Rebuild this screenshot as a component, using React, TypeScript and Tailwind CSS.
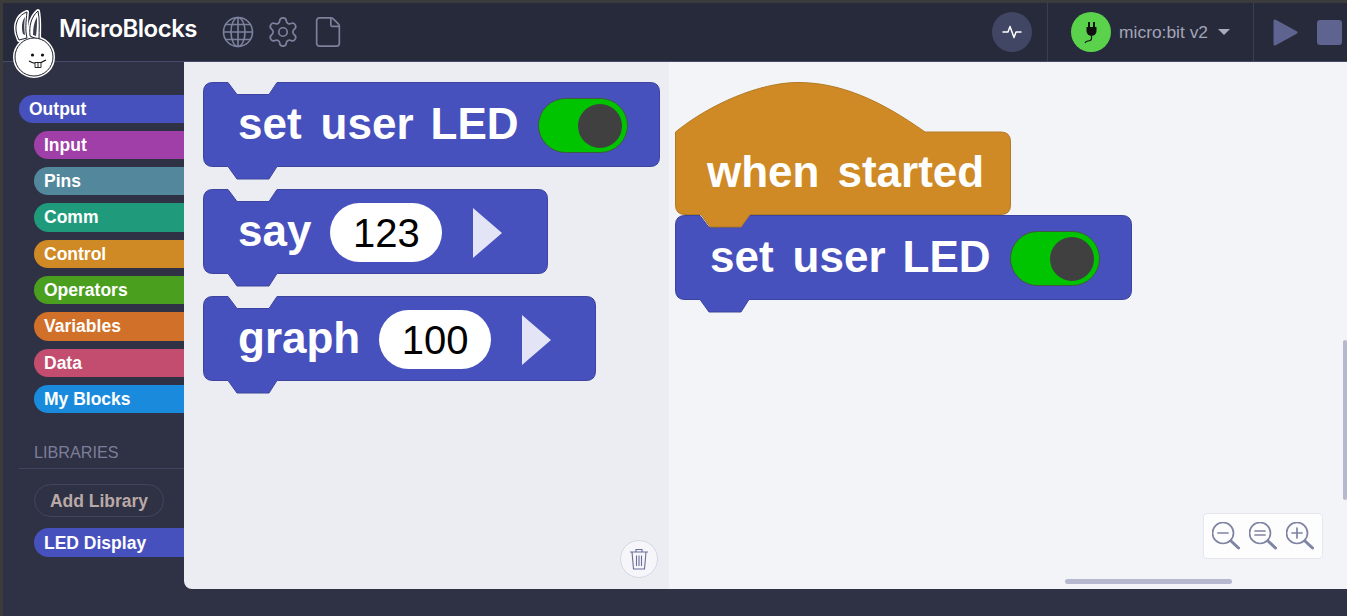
import { File, Settings } from "lucide-react";
import type { ReactNode } from "react";

const BLUE = "#4751bd";
const BLUE_EDGE = "#3c449f";
const ORANGE = "#cf8a25";
const ORANGE_EDGE = "#b27a24";

const categories = [
    { name: "Input", color: "bg-[#9f3fa7]" },
    { name: "Pins", color: "bg-[#53889c]" },
    { name: "Comm", color: "bg-[#1f9b7c]" },
    { name: "Control", color: "bg-[#cf8a25]" },
    { name: "Operators", color: "bg-[#4a9f1f]" },
    { name: "Variables", color: "bg-[#d17028]" },
    { name: "Data", color: "bg-[#c34d6e]" },
    { name: "My Blocks", color: "bg-[#1a8bdc]" },
];

const blockPath = (w: number, h: number) =>
    `M.5,10 Q.5,.5 10,.5 L25,.5 L34,12.5 L66,12.5 L74,.5 L${w - 10},.5 Q${w - 0.5},.5 ${w - 0.5},10 L${w - 0.5},${h - 10} Q${w - 0.5},${h - 0.5} ${w - 10},${h - 0.5} L74,${h - 0.5} L66,${h + 12} L34,${h + 12} L25,${h - 0.5} L10,${h - 0.5} Q.5,${h - 0.5} .5,${h - 10} Z`;

const hatPath = (w: number, h: number) =>
    `M.5,50 C35,22 85,.5 123,.5 C165,.5 205,18 250,50 L${w - 10},50 Q${w - 0.5},50 ${w - 0.5},60 L${w - 0.5},${h - 10} Q${w - 0.5},${h - 0.5} ${w - 10},${h - 0.5} L75,${h - 0.5} L66,${h + 12} L35,${h + 12} L26,${h - 0.5} L10,${h - 0.5} Q.5,${h - 0.5} .5,${h - 10} Z`;

const Block = ({ w, children }: { w: number; children: ReactNode }) => (
    <div className="relative h-[85px]">
        <svg width={w} height={99} className="absolute left-0 top-0">
            <path d={blockPath(w, 85)} fill={BLUE} stroke={BLUE_EDGE} />
        </svg>
        <div className="relative flex h-[85px] items-center pl-[35px] text-[44px] font-bold text-white">{children}</div>
    </div>
);

const Toggle = () => (
    <div className="ml-[1px] mt-[2px] flex h-[55px] w-[90px] items-center justify-end rounded-full border border-[#3f5a3f] bg-[#00c400] pr-[5px]">
        <div className="size-[44px] rounded-full bg-[#404040]" />
    </div>
);

const SetUserLed = () => (
    <Block w={457}>
        <div className="flex items-center gap-[18px]">
            <span className="mb-[2px]">set</span>
            <span className="mb-[2px] ml-[1px]">user</span>
            <span className="mb-[2px] -ml-[1px]">LED</span>
            <Toggle />
        </div>
    </Block>
);

const NumberSlot = ({ value }: { value: string }) => (
    <div className="mt-[2px] flex h-[59px] w-[112px] items-center justify-center rounded-full bg-white text-[40px] font-normal text-black">
        {value}
    </div>
);

const MoreArrow = () => (
    <svg width="30" height="50" className="ml-[31px] mt-[2px]">
        <polygon points="0,0 29,25 0,50" fill="#e3e4f6" />
    </svg>
);

const ZoomIcon = ({ children }: { children?: ReactNode }) => (
    <svg width="28" height="28" viewBox="0 0 28 28" fill="none" stroke="#7f84a3" strokeWidth="1.7" strokeLinecap="round">
        <circle cx="11" cy="11" r="10.5" />
        <path d="M19,19 L26.5,26" strokeWidth="3" />
        {children}
    </svg>
);

const Rabbit = () => (
    <svg width="50" height="72" viewBox="0 0 50 72" className="absolute left-[10px] top-[5px] z-20">
        <g fill="white" stroke="white" strokeWidth="4" strokeLinejoin="round">
            <path d="M6,32 C0,20 3,8 14,4 C13,13 12,22 14,30 Z" />
            <path d="M17,28 C16,18 18,9 25,3 C27,12 26,22 26,32 Z" />
            <circle cx="21" cy="49" r="19" />
        </g>
        <g fill="white" stroke="#1d1f2b" strokeWidth="1" strokeLinejoin="round">
            <path d="M6,32 C0,20 3,8 14,4 C13,13 12,22 14,30 Z" />
            <path d="M17,28 C16,18 18,9 25,3 C27,12 26,22 26,32 Z" />
            <circle cx="21" cy="49" r="19" />
        </g>
        <path d="M10,26 C8,19 9,13 12,9 C11,15 11,21 12,27 Z" fill="#3a3d50" />
        <path d="M20,27 C20,20 21,14 24,9 C24,15 24,21 23,28 Z" fill="#3a3d50" />
        <circle cx="19.5" cy="47" r="1.6" fill="#111" />
        <circle cx="29.5" cy="47" r="1.6" fill="#111" />
        <path d="M16,53 Q24,58 33,52" fill="none" stroke="#111" strokeWidth="1.2" />
        <path d="M22,54.5 h6 v5 h-6 z M25,54.5 v5" fill="white" stroke="#111" strokeWidth="0.9" />
    </svg>
);

const Header = () => (
    <header className="flex h-[59px] shrink-0 items-center border-b border-[#45496a] bg-[#272a3b] pl-[56px] pr-[5px]">
        <span className="mb-[6px] font-['Inter',sans-serif] text-[24px] font-semibold tracking-[-0.5px] text-white">MicroBlocks</span>
        <svg width="32" height="32" viewBox="0 0 32 32" fill="none" stroke="#7d819c" strokeWidth="1.6" className="ml-[25px]">
            <circle cx="16" cy="16" r="14.5" />
            <ellipse cx="16" cy="16" rx="7" ry="14.5" />
            <path d="M16,1.5 V30.5 M1.5,16 H30.5 M4,8.5 H28 M4,23.5 H28" />
        </svg>
        <Settings size={34} strokeWidth={1.2} color="#7d819c" className="ml-[12px]" />
        <File size={34} strokeWidth={1.2} color="#7d819c" className="ml-[11px]" />
        <div className="ml-auto flex size-[40px] items-center justify-center rounded-full bg-[#414664]">
            <svg width="20" height="14" viewBox="0 0 20 14" fill="none" stroke="white" strokeWidth="1.5" strokeLinejoin="round" strokeLinecap="round">
                <path d="M1,7 H6 L8,1.5 L12,12.5 L14,7 H19" />
            </svg>
        </div>
        <div className="ml-[15px] h-full w-px bg-[#3a3e57]" />
        <div className="ml-[23px] flex size-[40px] items-center justify-center rounded-full bg-[#5bd24c]">
            <svg width="40" height="40" viewBox="0 0 40 40" fill="none">
                <path d="M18,10 V15 M23,10 V15" stroke="#111" strokeWidth="2" />
                <path d="M15.5,15 H25.5 V19 A5,5 0 0 1 15.5,19 Z" fill="#111" />
                <path d="M20.5,24 V26 Q20.5,29 17,29 Q15,29 14,31" stroke="#111" strokeWidth="1.2" />
            </svg>
        </div>
        <span className="ml-[8px] text-[17.4px] text-[#a3a5b8]">micro:bit v2</span>
        <div className="ml-[10px] h-0 w-0 border-x-[6px] border-t-[6px] border-x-transparent border-t-[#a9abbd]" />
        <div className="ml-[23px] h-full w-px bg-[#3a3e57]" />
        <svg width="25" height="27" viewBox="0 0 25 27" className="ml-[19px]">
            <path d="M2,2 L23,13.5 L2,25 Z" fill="#5e648f" stroke="#5e648f" strokeWidth="3" strokeLinejoin="round" />
        </svg>
        <div className="ml-[19px] size-[25px] rounded-[3px] bg-[#5e648f]" />
    </header>
);

const Sidebar = () => (
    <aside className="w-[181px] shrink-0 pt-[32.5px] text-[17.5px] font-bold text-white">
        <div className="flex flex-col gap-2">
            <div className="ml-[16px] flex h-[28.3px] items-center rounded-l-full bg-[#4751bd] pl-[10px]">Output</div>
            {categories.map((c) => (
                <div key={c.name} className={`ml-[31px] flex h-[28.3px] items-center rounded-l-full pl-[10px] ${c.color}`}>
                    {c.name}
                </div>
            ))}
        </div>
        <div className="ml-[16px] mt-[27px] border-b border-[#41445f] pb-[4px] pl-[15px] text-[16.2px] font-normal text-[#7b7f98]">
            LIBRARIES
        </div>
        <div className="ml-[31px] mt-[15px] flex h-[33px] w-[130px] items-center justify-center rounded-full border border-[#43465c] text-[#b9a9a6]">
            Add Library
        </div>
        <div className="ml-[31px] mt-[11px] flex h-[29px] items-center rounded-l-full bg-[#4751bd] pl-[10px]">LED Display</div>
    </aside>
);

const Palette = () => (
    <div className="relative flex w-[485px] shrink-0 flex-col gap-[22px] rounded-bl-lg bg-[#ecedf2] pl-[19px] pt-[20px]">
        <SetUserLed />
        <Block w={345}>
            <span className="mb-[2px] mr-[19px]">say</span>
            <NumberSlot value="123" />
            <MoreArrow />
        </Block>
        <Block w={393}>
            <span className="mb-[2px] mr-[19px]">graph</span>
            <NumberSlot value="100" />
            <MoreArrow />
        </Block>
        <div className="absolute bottom-[11px] right-[11px] flex size-[38px] items-center justify-center rounded-full border border-[#d5d7e4] bg-[#f6f6fa]">
            <svg width="20" height="22" viewBox="0 0 20 22" fill="none" stroke="#696e96" strokeWidth="1.1">
                <path d="M1,4 H19 M7,4 V1.5 H13 V4 M3,4 L4.5,21 H15.5 L17,4" />
                <path d="M7.5,7.5 V18 M10,7.5 V18 M12.5,7.5 V18" />
            </svg>
        </div>
    </div>
);

const Scripts = () => (
    <div className="relative flex-1 overflow-hidden bg-[#f3f4f7] pl-[6px] pt-[20px]">
        <div className="relative z-10 h-[133px]">
            <svg width="336" height="147" className="absolute left-0 top-0">
                <path d={hatPath(336, 133)} fill={ORANGE} stroke={ORANGE_EDGE} />
            </svg>
            <div className="relative flex h-[133px] items-end gap-[18px] pb-[10px] pl-[32px] text-[44px] font-bold text-white">
                <span>when</span>
                <span>started</span>
            </div>
        </div>
        <SetUserLed />
        <div className="absolute bottom-[30px] right-[24px] flex h-[46px] w-[120px] items-center justify-center gap-[9px] rounded-[4px] border border-[#e6e7ee] bg-[#fdfdfe]">
            <ZoomIcon>
                <path d="M6,11 H16" />
            </ZoomIcon>
            <ZoomIcon>
                <path d="M6,9 H16 M6,13 H16" />
            </ZoomIcon>
            <ZoomIcon>
                <path d="M6,11 H16 M11,6 V16" />
            </ZoomIcon>
        </div>
        <div className="absolute bottom-[5px] right-[115px] h-[5px] w-[167px] rounded-full bg-[#b6b8cf]" />
        <div className="absolute right-0 top-[278px] h-[160px] w-[4px] rounded-full bg-[#b6b8cf]" />
    </div>
);

export default function App() {
    return (
        <div className="relative flex h-[616px] w-[1347px] flex-col overflow-hidden border-l-[3px] border-t-[3px] border-[#3b3b3b] bg-[#2f3145] font-['Liberation_Sans',Arial,sans-serif]">
            <Rabbit />
            <Header />
            <div className="flex min-h-0 flex-1 pb-[27px]">
                <Sidebar />
                <Palette />
                <Scripts />
            </div>
        </div>
    );
}
